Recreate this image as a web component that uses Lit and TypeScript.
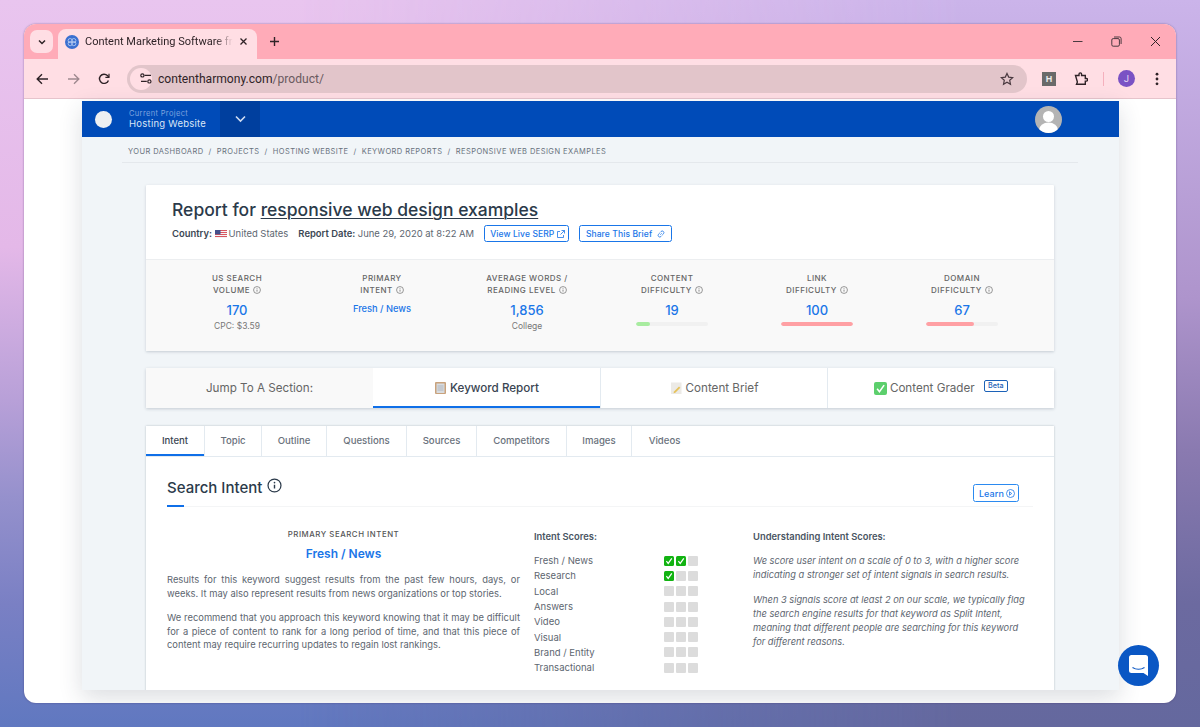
import { LitElement, html, css, svg } from "lit";
import { customElement } from "lit/decorators.js";

const info = (size = 9) => html`<svg class="info" width=${size} height=${size} viewBox="0 0 16 16" fill="none" stroke="currentColor" stroke-width="1.3"><circle cx="8" cy="8" r="6.9"/><path d="M8 7.2v4" stroke-width="1.5"/><circle cx="8" cy="4.9" r=".9" fill="currentColor" stroke="none"/></svg>`;

const check = (size = 10) => html`<svg class="check" width=${size} height=${size} viewBox="0 0 10 10"><rect width="10" height="10" rx="1.5" fill="#12b312"/><path d="M2.4 5.2l1.8 2.2 3.6-5" fill="none" stroke="#fff" stroke-width="1.2"/></svg>`;

const flag = svg`<svg width="12" height="8" viewBox="0 0 12 8"><rect width="12" height="8" fill="#f4f4f4"/><path d="M0 0h12v1H0zM0 2h12v1H0zM0 4h12v1H0zM0 6h12v1H0z" fill="#d9555f"/><rect width="5.5" height="4.4" fill="#44508c"/></svg>`;

const stats = [
  { a: "US Search", b: "Volume", value: "170", sub: "CPC: $3.59" },
  { a: "Primary", b: "Intent", text: "Fresh / News" },
  { a: "Average Words /", b: "Reading Level", value: "1,856", sub: "College" },
  { a: "Content", b: "Difficulty", value: "19", bar: 19, tone: "#a8ecA0" },
  { a: "Link", b: "Difficulty", value: "100", bar: 100, tone: "#ffa0a4" },
  { a: "Domain", b: "Difficulty", value: "67", bar: 67, tone: "#ffa0a4" },
];

const tabs = [
  { label: "Intent", w: 59 },
  { label: "Topic", w: 57 },
  { label: "Outline", w: 65 },
  { label: "Questions", w: 80 },
  { label: "Sources", w: 70 },
  { label: "Competitors", w: 90 },
  { label: "Images", w: 65 },
  { label: "Videos", w: 65 },
];

const scores: [string, number][] = [
  ["Fresh / News", 2],
  ["Research", 1],
  ["Local", 0],
  ["Answers", 0],
  ["Video", 0],
  ["Visual", 0],
  ["Brand / Entity", 0],
  ["Transactional", 0],
];

@customElement("app-root")
export class AppRoot extends LitElement {
  static styles = css`
    :host {
      display: block;
      position: relative;
      width: 1200px;
      height: 727px;
      box-sizing: border-box;
      padding: 24px;
      overflow: hidden;
      background: linear-gradient(180deg, #e9c5ef 0%, #e4b8e8 34%, #b8a0d8 55%, #9490cc 69%, #7a80c4 83%, #6078c0 100%);
      font-family: Inter, "Liberation Sans", sans-serif;
      color: #4a5563;
    }
    /* second wash: the wallpaper runs cooler and darker towards the right */
    :host::before {
      content: "";
      position: absolute;
      inset: 0;
      background: linear-gradient(180deg, #cbb4ea 0%, #ae94cc 41%, #8a7ab0 62%, #6c6aa0 83%, #64689e 100%);
      -webkit-mask-image: linear-gradient(90deg, transparent 25%, #000 80%);
      mask-image: linear-gradient(90deg, transparent 25%, #000 80%);
    }
    * { box-sizing: border-box; }
    svg { display: block; flex: none; }
    .window {
      position: relative;
      height: 679px;
      border-radius: 12px;
      overflow: hidden;
      background: #fff;
      box-shadow: 0 0 2px rgba(60, 40, 90, 0.55);
    }

    /* browser chrome */
    .strip {
      height: 35px;
      background: #ffabb8;
      display: flex;
      align-items: flex-end;
      padding-left: 6px;
      font-family: Roboto, "Noto Sans", sans-serif;
      color: #2f2327;
    }
    .tabs-btn {
      width: 23px;
      height: 23px;
      margin: 0 5px 6px 0;
      border-radius: 7px;
      background: #ffdee4;
      display: flex;
      align-items: center;
      justify-content: center;
    }
    .tab {
      width: 199px;
      height: 30px;
      background: #ffdee4;
      border-radius: 8px 8px 0 0;
      display: flex;
      align-items: center;
      padding: 0 9px 5px 7px;
      font-size: 11px;
      white-space: nowrap;
    }
    .tab .name {
      margin-left: 6px;
      width: 148px;
      -webkit-mask-image: linear-gradient(90deg, #000 88%, transparent);
      mask-image: linear-gradient(90deg, #000 88%, transparent);
    }
    .tab svg:last-child { margin-left: 6px; }
    .plus { margin: 0 0 6px 12px; height: 23px; display: flex; align-items: center; }
    .winctl { margin-left: auto; display: flex; align-items: center; height: 35px; padding: 0 1px 1px 0; }
    .winctl span { width: 39px; display: flex; justify-content: center; }
    .toolbar {
      height: 40px;
      background: #ffdee4;
      border-bottom: 1px solid #e6c4cc;
      display: flex;
      align-items: center;
      padding: 0 10px 0 12px;
      font-family: Roboto, "Noto Sans", sans-serif;
    }
    .nav { width: 31px; display: flex; justify-content: flex-start; }
    .omni {
      margin-left: -2px;
      width: 900px;
      height: 28px;
      border-radius: 14px;
      background: #e2c5ca;
      display: flex;
      align-items: center;
      padding: 0 13px 0 3px;
      font-size: 12.1px;
      color: #2f2327;
    }
    .site {
      width: 22px;
      height: 22px;
      border-radius: 50%;
      background: #ffdee4;
      display: flex;
      align-items: center;
      justify-content: center;
      margin-right: 6px;
    }
    .omni em { font-style: normal; color: #6a5a5f; }
    .omni svg:last-child { margin-left: auto; }
    .tools { display: flex; align-items: center; margin-left: 15px; flex: 1; }
    .ext-h {
      width: 14px;
      height: 14px;
      background: #6a6a6a;
      color: #eee;
      font: 700 9px "Liberation Sans", sans-serif;
      display: flex;
      align-items: center;
      justify-content: center;
    }
    .puzzle { margin-left: 18px; }
    .sep { width: 1px; height: 14px; background: #f5b0bd; margin: 0 14px 0 15px; }
    .avatar {
      width: 17px;
      height: 17px;
      border-radius: 50%;
      background: #7a52c4;
      color: #e8dcf6;
      font-size: 9px;
      display: flex;
      align-items: center;
      justify-content: center;
    }
    .dots { margin-left: 20px; }

    /* page */
    .page {
      width: 1037px;
      height: 589px;
      margin: 2px 0 0 58px;
      background: #f1f5f8;
      box-shadow: 0 8px 22px rgba(40, 50, 70, 0.16);
      overflow: hidden;
    }
    .topbar {
      height: 36px;
      background: #004bb8;
      display: flex;
      align-items: center;
      padding-left: 13px;
      color: #fff;
    }
    .logo { width: 17px; height: 17px; border-radius: 50%; background: #eef0f2; }
    .project { margin-left: 17px; width: 91px; padding-top: 1px; }
    .project small { display: block; font-size: 7.5px; line-height: 9px; letter-spacing: 0.35px; color: #7ea3df; }
    .project b { display: block; font-size: 9.5px; line-height: 12px; font-weight: 400; letter-spacing: 0.25px; color: #dbe6f6; }
    .drop {
      width: 40px;
      height: 36px;
      background: #003f9e;
      display: flex;
      align-items: center;
      justify-content: center;
    }
    .user { margin: 0 57px 0 auto; }
    .crumbs {
      margin: 0 41px 0 40px;
      height: 26px;
      border-bottom: 1px solid #e4e8ec;
      padding: 10px 0 0 6px;
      font-size: 7.5px;
      line-height: 10px;
      letter-spacing: 0.42px;
      color: #68717c;
      white-space: nowrap;
      text-transform: uppercase;
    }
    .crumbs i { font-style: normal; margin: 0 5.1px; }
    .card {
      margin: 22px 65px 0 64px;
      background: #fff;
      box-shadow: 0 1px 3px rgba(40, 60, 80, 0.22);
      border-radius: 1px;
    }
    .head { height: 74px; padding: 14px 26px 0; }
    h1 { margin: 0; font-size: 17.5px; line-height: 22px; font-weight: 500; color: #2b3a4a; }
    h1 a { text-decoration: underline; text-decoration-thickness: 1px; text-underline-offset: 2px; }
    .meta {
      display: flex;
      align-items: center;
      margin-top: 4px;
      font-size: 9.45px;
      white-space: nowrap;
      color: #5d6670;
    }
    .meta b { font-weight: 600; color: #3c4754; margin-right: 2.5px; }
    .meta .flag { margin-right: 2px; }
    .meta .date { margin-left: 10px; margin-right: 10px; }
    .btn {
      display: inline-flex;
      align-items: center;
      gap: 3px;
      height: 17px;
      padding: 0 3px 0 5px;
      border: 1px solid #1a76e8;
      border-radius: 2.5px;
      background: #fff;
      color: #1a76e8;
      font-size: 8.5px;
      font-weight: 500;
      letter-spacing: 0.1px;
    }
    .meta .btn + .btn { margin-left: 10px; padding: 0 5.5px; }
    .stats {
      height: 92px;
      background: #f9f9f9;
      border-top: 1px solid #eceef0;
      display: grid;
      grid-template-columns: repeat(6, 145px);
      padding: 12px 0 0 18.5px;
    }
    .stat { text-align: center; }
    .stat h4 {
      margin: 0;
      font-size: 8px;
      line-height: 12px;
      font-weight: 500;
      letter-spacing: 0.48px;
      text-transform: uppercase;
      color: #656565;
    }
    .stat h4 span { display: inline-flex; align-items: center; gap: 3px; }
    .stat .value { margin-top: 6px; font-size: 13px; line-height: 16px; font-weight: 500; color: #1a76e8; }
    .stat .text { margin-top: 7px; font-size: 9.3px; line-height: 12px; font-weight: 500; color: #1a76e8; }
    .stat .sub { margin-top: 3px; font-size: 8.5px; line-height: 11px; color: #777; }
    .bar { width: 72px; height: 4px; margin: 4px auto 0; border-radius: 2px; background: #f1f1f1; overflow: hidden; }
    .bar div { height: 100%; border-radius: 2px; }

    .jump {
      margin: 17px 65px 0 64px;
      height: 40px;
      display: grid;
      grid-template-columns: repeat(4, 1fr);
      background: #fff;
      box-shadow: 0 1px 3px rgba(40, 60, 80, 0.22);
      font-size: 11.65px;
      color: #666;
    }
    .jump > div {
      display: flex;
      align-items: center;
      justify-content: center;
      gap: 3px;
      border-left: 1px solid #e3eaf0;
    }
    .jump .lead { background: #f9f9f9; border-left: 0; }
    .jump .on { color: #3a4552; font-weight: 500; border-left: 0; box-shadow: inset 0 -2px 0 #0f6fe8; }
    .beta {
      margin: -4px 0 0 6px;
      border: 1px solid #1c62b8;
      border-radius: 2px;
      color: #1c62b8;
      font-size: 7.2px;
      font-weight: 500;
      line-height: 9.5px;
      padding: 0 3.5px;
    }

    .panel {
      margin: 18px 65px 0 64px;
      height: 300px;
      background: #fff;
      box-shadow: 0 0 2px rgba(40, 60, 80, 0.3);
    }
    .tabbar { display: flex; height: 31px; border-bottom: 1px solid #e3eaf0; font-size: 9.6px; font-weight: 500; color: #6a727c; }
    .tabbar div { display: flex; align-items: center; justify-content: center; padding-bottom: 2px; border-right: 1px solid #e3eaf0; }
    .tabbar div:last-child { border-right: 0; }
    .tabbar .on { color: #3a4552; box-shadow: inset 0 -2px 0 #0f6fe8; }
    .section { padding: 0 21px; }
    .title {
      height: 50px;
      display: flex;
      align-items: flex-start;
      padding-top: 21px;
      border-bottom: 1px solid #f4f5f6;
      position: relative;
    }
    .title::after { content: ""; position: absolute; left: 0; bottom: -1px; width: 17px; height: 2px; background: #0f6fe8; }
    h2 { margin: 0; font-size: 15px; line-height: 20px; font-weight: 500; color: #2b3a4a; }
    .title .info { margin: 0 0 0 5px; color: #2b3a4a; }
    .title .btn { margin: 6px 14px 0 auto; height: 18px; padding: 0 3px 0 5px; font-size: 9px; gap: 2px; border-color: #2b8af0; }
    .cols { display: flex; padding-top: 22px; }
    .left { width: 353px; font-size: 9.4px; line-height: 13.6px; color: #5d6670; }
    .left h5 { margin: 0; text-align: center; font-size: 7.8px; line-height: 10px; font-weight: 500; letter-spacing: 0.55px; color: #555; }
    .left .big { margin-top: 7px; text-align: center; font-size: 12px; line-height: 16px; font-weight: 600; color: #1a76e8; }
    .left p { margin: 11px 0 0; text-align: justify; }
    .mid { margin-left: 14px; width: 164px; padding-top: 2px; font-size: 9.5px; }
    .mid h6, .right h6 { margin: 0; font-size: 9.4px; line-height: 12px; font-weight: 600; color: #4a5563; }
    .rows { margin-top: 10px; }
    .row { display: flex; justify-content: space-between; align-items: center; height: 15.3px; color: #5d6670; }
    .boxes { display: flex; gap: 2px; }
    .box { width: 10px; height: 10px; border-radius: 1px; background: #dcdcdc; }
    .right { margin-left: 55px; width: 277px; padding-top: 2px; font-size: 9.25px; line-height: 14px; font-style: italic; color: #5d6670; }
    .right h6 { font-style: normal; }
    .right p { margin: 11px 0 0; }
    .chat {
      position: absolute;
      left: 1094px;
      top: 621px;
      width: 41px;
      height: 41px;
      border-radius: 50%;
      background: #0a57c4;
      display: flex;
      align-items: center;
      justify-content: center;
    }
  `;

  render() {
    return html`<div class="window">
      <div class="strip">
        <div class="tabs-btn">
          <svg width="10" height="10" viewBox="0 0 10 10" fill="none" stroke="#2f2327" stroke-width="1.5"><path d="M2 3.5l3 3 3-3"/></svg>
        </div>
        <div class="tab">
          <svg width="14" height="14" viewBox="0 0 14 14"><circle cx="7" cy="7" r="7" fill="#3a6fd0"/><g fill="none" stroke="#bcd0f4" stroke-width=".8"><circle cx="5.2" cy="5.6" r="2.1"/><circle cx="8.8" cy="5.6" r="2.1"/><circle cx="5.2" cy="8.6" r="2.1"/><circle cx="8.8" cy="8.6" r="2.1"/></g></svg>
          <span class="name">Content Marketing Software fro</span>
          <svg width="9" height="9" viewBox="0 0 9 9" stroke="#2f2327" stroke-width="1.3"><path d="M1.5 1.5l6 6M7.5 1.5l-6 6"/></svg>
        </div>
        <div class="plus">
          <svg width="11" height="11" viewBox="0 0 11 11" stroke="#2f2327" stroke-width="1.4"><path d="M5.5 1v9M1 5.5h9"/></svg>
        </div>
        <div class="winctl">
          <span><svg width="11" height="11" viewBox="0 0 11 11" stroke="#4a3a40"><path d="M1 5.5h9.5"/></svg></span>
          <span><svg width="11" height="11" viewBox="0 0 11 11" fill="none" stroke="#4a3a40"><rect x=".8" y="2.6" width="7.6" height="7.6" rx="1.4"/><path d="M3 1h5.5a1.6 1.6 0 0 1 1.6 1.6V8"/></svg></span>
          <span><svg width="11" height="11" viewBox="0 0 11 11" stroke="#2f2327"><path d="M1 1l9 9M10 1l-9 9"/></svg></span>
        </div>
      </div>
      <div class="toolbar">
        <div class="nav"><svg width="13" height="12" viewBox="0 0 13 12" fill="none" stroke="#2f2327" stroke-width="1.4"><path d="M12 6H1.5M6 1.2L1.2 6 6 10.8"/></svg></div>
        <div class="nav"><svg width="13" height="12" viewBox="0 0 13 12" fill="none" stroke="#a08a90" stroke-width="1.4"><path d="M1 6h10.5M7 1.2L11.8 6 7 10.8"/></svg></div>
        <div class="nav"><svg width="12" height="12" viewBox="0 0 12 12" fill="none" stroke="#2f2327" stroke-width="1.4"><path d="M10.4 7.4A4.6 4.6 0 1 1 9.4 2.6L10.8 4"/><path d="M11 .8V4.4H7.4" stroke-width="1.2"/></svg></div>
        <div class="omni">
          <span class="site"><svg width="12" height="11" viewBox="0 0 12 11" fill="none" stroke="#2f2327" stroke-width="1.2"><path d="M4.5 2.4H11M1 8.4h5.8"/><circle cx="2.4" cy="2.4" r="1.6"/><circle cx="9.4" cy="8.4" r="1.6"/></svg></span>
          <span>contentharmony.com<em>/product/</em></span>
          <svg width="14" height="14" viewBox="0 0 14 14" fill="none" stroke="#4a3a40" stroke-width="1.2"><path d="M7 1.4l1.7 3.7 4 .5-3 2.7.8 4L7 10.3l-3.500 2 .8-4-3-2.700 4-.5z"/></svg>
        </div>
        <div class="tools">
          <span class="ext-h">H</span>
          <svg class="puzzle" width="14" height="14" viewBox="0 0 14 14" fill="none" stroke="#2f2327" stroke-width="1.4"><path d="M1.5 3.500H5V2.200a1.300 1.300 0 0 1 2.600 0v1.300h3.700v3h1a1.300 1.300 0 0 1 0 2.600h-1v3.200H2.500l.9-2.300-1.900-6.500z"/></svg>
          <span class="sep"></span>
          <span class="avatar">J</span>
          <svg class="dots" width="4" height="14" viewBox="0 0 4 14" fill="#2f2327"><circle cx="2" cy="2.200" r="1.400"/><circle cx="2" cy="7" r="1.400"/><circle cx="2" cy="11.800" r="1.400"/></svg>
        </div>
      </div>

      <div class="page">
        <div class="topbar">
          <div class="logo"></div>
          <div class="project"><small>Current Project</small><b>Hosting Website</b></div>
          <div class="drop"><svg width="11" height="8" viewBox="0 0 11 8" fill="none" stroke="#cfdcf2" stroke-width="1.600"><path d="M1 1.500l4.500 4.500L10 1.500"/></svg></div>
          <svg class="user" width="27" height="27" viewBox="0 0 27 27"><defs><clipPath id="u"><circle cx="13.500" cy="13.500" r="13.500"/></clipPath></defs><g clip-path="url(#u)"><rect width="27" height="27" fill="#b4b4b4"/><circle cx="13.500" cy="10.500" r="5.500" fill="#fff"/><ellipse cx="13.500" cy="24" rx="9.500" ry="7.500" fill="#fff"/></g></svg>
        </div>
        <div class="crumbs">Your Dashboard<i>/</i>Projects<i>/</i>Hosting Website<i>/</i>Keyword Reports<i>/</i>Responsive Web Design Examples</div>

        <div class="card">
          <div class="head">
            <h1>Report for <a>responsive web design examples</a></h1>
            <div class="meta">
              <b>Country:</b><span class="flag">${flag}</span>United States
              <span class="date"><b>Report Date:</b>June 29, 2020 at 8:22 AM</span>
              <span class="btn">View Live SERP <svg width="8" height="8" viewBox="0 0 8 8" fill="none" stroke="currentColor" stroke-width=".8"><path d="M6.500 5v2.500h-6v-6H3M4.500.5h3v3M7.500.5L3.500 4.500"/></svg></span>
              <span class="btn">Share This Brief <svg style="margin-left:2px" width="8" height="8" viewBox="0 0 8 8" fill="none" stroke="currentColor" stroke-width=".8"><path d="M3.300 4.700l1.400-1.400M3 2.500l1-1a1.600 1.600 0 0 1 2.400 2.300l-1 1M5 5.500l-1 1a1.600 1.600 0 0 1-2.400-2.300l1-1"/></svg></span>
            </div>
          </div>
          <div class="stats">
            ${stats.map(
              (s) => html`<div class="stat">
                <h4>${s.a}<br /><span>${s.b} ${info(8)}</span></h4>
                ${s.value ? html`<div class="value">${s.value}</div>` : html`<div class="text">${s.text}</div>`}
                ${s.sub ? html`<div class="sub">${s.sub}</div>` : ""}
                ${s.bar !== undefined
                  ? html`<div class="bar"><div style="width:${s.bar}%;background:${s.tone}"></div></div>`
                  : ""}
              </div>`
            )}
          </div>
        </div>

        <div class="jump">
          <div class="lead">Jump To A Section:</div>
          <div class="on">
            <svg width="13" height="14" viewBox="0 0 13 14"><rect x="1" y="1" width="11" height="12" rx="1" fill="#c9a27c"/><rect x="2.500" y="2.500" width="8" height="9.500" fill="#d8dce0"/><path d="M3.500 5h6M3.500 7h6M3.500 9h6" stroke="#9aa0a8" stroke-width=".6"/></svg>
            Keyword Report
          </div>
          <div>
            <svg width="13" height="14" viewBox="0 0 13 14"><rect x="1" y="1.500" width="10.500" height="11.500" fill="#eceae6"/><path d="M4 10.500l5-5 1.300 1.200-5 5-1.800.5z" fill="#e6c25a"/></svg>
            Content Brief
          </div>
          <div>
            <svg width="13" height="13" viewBox="0 0 10 10"><rect width="10" height="10" rx="1.500" fill="#5ccf6c"/><path d="M2.400 5.200l1.800 2.200 3.600-5" fill="none" stroke="#fff" stroke-width="1.200"/></svg>
            Content Grader <span class="beta">Beta</span>
          </div>
        </div>

        <div class="panel">
          <div class="tabbar">
            ${tabs.map(
              (t, i) => html`<div class=${i === 0 ? "on" : ""} style="width:${t.w}px">${t.label}</div>`
            )}
          </div>
          <div class="section">
            <div class="title">
              <h2>Search Intent</h2>
              ${info(15)}
              <span class="btn">Learn <svg width="9" height="9" viewBox="0 0 9 9" fill="none" stroke="currentColor" stroke-width=".8"><circle cx="4.500" cy="4.500" r="4"/><path d="M3.500 2.800l2.200 1.700-2.200 1.700z"/></svg></span>
            </div>
            <div class="cols">
              <div class="left">
                <h5>PRIMARY SEARCH INTENT</h5>
                <div class="big">Fresh / News</div>
                <p>Results for this keyword suggest results from the past few hours, days, or weeks. It may also represent results from news organizations or top stories.</p>
                <p>We recommend that you approach this keyword knowing that it may be difficult for a piece of content to rank for a long period of time, and that this piece of content may require recurring updates to regain lost rankings.</p>
              </div>
              <div class="mid">
                <h6>Intent Scores:</h6>
                <div class="rows">
                  ${scores.map(
                    ([name, n]) => html`<div class="row">
                      <span>${name}</span>
                      <span class="boxes">
                        ${[0, 1, 2].map((i) => (i < n ? check() : html`<span class="box"></span>`))}
                      </span>
                    </div>`
                  )}
                </div>
              </div>
              <div class="right">
                <h6>Understanding Intent Scores:</h6>
                <p>We score user intent on a scale of 0 to 3, with a higher score indicating a stronger set of intent signals in search results.</p>
                <p>When 3 signals score at least 2 on our scale, we typically flag the search engine results for that keyword as Split Intent, meaning that different people are searching for this keyword for different reasons.</p>
              </div>
            </div>
          </div>
        </div>
      </div>
      <div class="chat">
        <svg width="19" height="21" viewBox="0 0 19 21"><path d="M2.500 0h14A2.500 2.500 0 0 1 19 2.500V21l-4.500-3H2.500A2.500 2.500 0 0 1 0 15.500v-13A2.500 2.500 0 0 1 2.500 0z" fill="#fff"/><path d="M3.500 12.500c3.500 2.300 8.500 2.300 12 0" fill="none" stroke="#0a57c4" stroke-width="1.200"/></svg>
      </div>
    </div>`;
  }
}
